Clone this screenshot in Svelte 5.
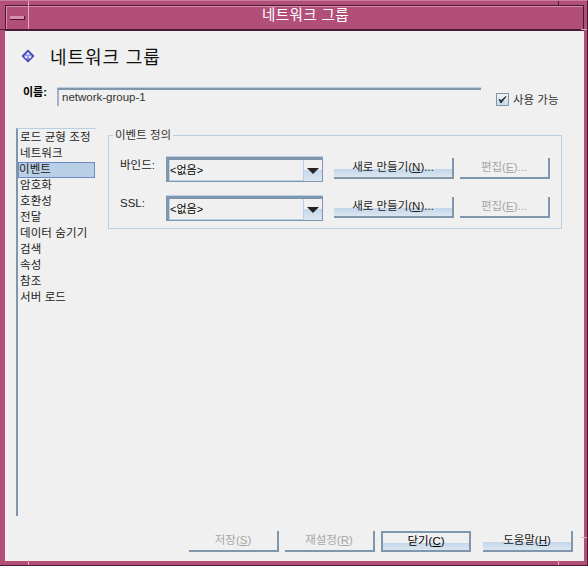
<script lang="ts">
	const sections = ['로드 균형 조정', '네트워크', '이벤트', '암호화', '호환성', '전달', '데이터 숨기기', '검색', '속성', '참조', '서버 로드'];
	const selected = '이벤트';

	const rows = [
		{ label: '바인드:', value: '<없음>' },
		{ label: 'SSL:', value: '<없음>' }
	];

	const footer = [
		{ text: '저장', key: 'S', disabled: true },
		{ text: '재설정', key: 'R', disabled: true },
		{ text: '닫기', key: 'C', isDefault: true },
		{ text: '도움말', key: 'H' }
	];
</script>

<div class="frame">
	<span class="notch top-left-v"></span>
	<span class="notch top-right-v"></span>
	<span class="notch left-h"></span>
	<span class="notch right-h"></span>
	<span class="notch bottom-left-v"></span>
	<span class="notch bottom-right-v"></span>
	<span class="notch bottom-right-h"></span>

	<header class="titlebar">
		<div class="menu-btn"><span class="dash"></span></div>
		<div class="title">네트워크 그룹</div>
	</header>

	<main class="content">
		<div class="heading">
			<svg width="14" height="14" viewBox="0 0 14 14" aria-hidden="true">
				<path d="M7 0.5 13.5 7 7 13.5 0.5 7Z" fill="#3a3fb4" />
				<path d="M7 2.5 11.5 7 7 11.5 2.5 7Z" fill="#8a8ee0" />
				<circle cx="7" cy="4.8" r="1.3" fill="#e4e6fa" />
				<circle cx="5" cy="8" r="1.3" fill="#e4e6fa" />
				<circle cx="9" cy="8" r="1.3" fill="#e4e6fa" />
			</svg>
			<h1>네트워크 그룹</h1>
		</div>

		<div class="name-row">
			<label class="name-label" for="name">이름:</label>
			<input id="name" class="name-input" value="network-group-1" />
			<div class="enabled">
				<span class="check">
					<svg width="9" height="9" viewBox="0 0 9 9" aria-hidden="true">
						<path d="M1 4.5 3 8 8 1.5 3.2 5.5Z" fill="#2b2f36" stroke="#2b2f36" stroke-width="1" />
					</svg>
				</span>
				<span>사용 가능</span>
			</div>
		</div>

		<div class="split">
			<ul class="nav">
				{#each sections as s}
					<li class:active={s === selected}>{s}</li>
				{/each}
			</ul>

			<fieldset class="group">
				<legend>이벤트 정의</legend>
				{#each rows as row}
					<div class="row">
						<span class="row-label">{row.label}</span>
						<div class="combo">
							<div class="combo-value">{row.value}</div>
							<div class="combo-arrow"><span class="tri"></span></div>
						</div>
						<button class="btn new">새로 만들기(<u>N</u>)...</button>
						<button class="btn edit" disabled>편집(<u>E</u>)...</button>
					</div>
				{/each}
			</fieldset>
		</div>

		<footer class="actions">
			{#each footer as b}
				<button class="btn foot" class:primary={b.isDefault} disabled={b.disabled}>{b.text}(<u>{b.key}</u>)</button>
			{/each}
		</footer>
	</main>
</div>

<style>
	:global(body) {
		margin: 0;
		background: #f0f0f0;
	}

	.frame {
		position: relative;
		box-sizing: border-box;
		width: 588px;
		height: 566px;
		display: flex;
		flex-direction: column;
		background: #b14f78;
		border-style: solid;
		border-width: 1px 1px 1px 0;
		border-color: #cb7ba0 #4a1a33 #4a1a33 #cb7ba0;
		padding: 4px 3px 4px 5px;
		font-family: 'Liberation Sans', 'Noto Sans CJK KR', sans-serif;
		font-size: 12px;
		color: #222;
		overflow: hidden;
	}

	.notch {
		position: absolute;
		background: #e6a9c4;
	}
	.top-left-v { left: 28px; top: 0; width: 1px; height: 28px; }
	.top-right-v { left: 558px; top: 0; width: 1px; height: 5px; background: #4a1a33; }
	.left-h { left: 0; top: 28px; width: 6px; height: 1px; background: #4a1a33; }
	.right-h { right: 0; top: 28px; width: 6px; height: 1px; }
	.bottom-left-v { left: 28px; bottom: 0; width: 1px; height: 5px; }
	.bottom-right-v { left: 558px; bottom: 0; width: 1px; height: 5px; }
	.bottom-right-h { right: 0; top: 536px; width: 6px; height: 1px; }

	.titlebar {
		flex: none;
		height: 23px;
		display: flex;
		align-items: center;
		background: #b14f78;
		border: 1px solid #4a1a33;
		box-shadow: inset 1px 1px 0 #d98fb0;
	}

	.menu-btn {
		width: 22px;
		height: 100%;
		display: flex;
		align-items: center;
		justify-content: center;
		flex: none;
	}

	.dash {
		display: block;
		width: 15px;
		height: 4px;
		background: #d98fb0;
		border-bottom: 1px solid #4a1a33;
		border-right: 1px solid #4a1a33;
		box-sizing: border-box;
	}

	.title {
		flex: 1;
		text-align: center;
		color: #fff;
		font-size: 14.5px;
		line-height: 16px;
		padding-bottom: 5px;
		letter-spacing: 0.4px;
	}

	.content {
		flex: 1;
		min-height: 0;
		display: flex;
		flex-direction: column;
		background: #f0f0f0;
		border-top: 1px solid #4a1a33;
		padding: 0 11px 9px 11px;
	}

	.heading {
		display: flex;
		align-items: center;
		gap: 15px;
		height: 24px;
		margin-top: 13px;
		padding-left: 5px;
	}

	h1 {
		margin: 0;
		font-size: 18px;
		font-weight: 400;
		letter-spacing: 0.9px;
		color: #111;
	}

	.name-row {
		display: flex;
		align-items: flex-start;
		margin-top: 20px;
		height: 40px;
	}

	.name-label {
		width: 34px;
		margin-left: 7px;
		margin-top: -4px;
		color: #000;
		font-weight: 700;
		font-size: 11px;
		line-height: 16px;
	}

	.name-input {
		box-sizing: border-box;
		width: 424px;
		height: 18px;
		padding: 0 0 2px 3px;
		margin: 0;
		background: transparent;
		border: none;
		border-top: 2px solid #7f96ad;
		border-left: 2px solid #9fb4ca;
		box-shadow: 0 -1px 0 #b8cfe5;
		outline: none;
		font: inherit;
		font-size: 11.5px;
		color: #333;
	}

	.enabled {
		display: flex;
		align-items: center;
		gap: 4px;
		margin: 3px 0 0 15px;
		font-size: 11.5px;
		color: #333;
		white-space: nowrap;
	}

	.check {
		box-sizing: border-box;
		width: 13px;
		height: 13px;
		display: flex;
		align-items: center;
		justify-content: center;
		border: 1px solid #7f96ad;
		background: linear-gradient(#f0f0f0 10%, #c4d7ea);
	}

	.split {
		flex: 1;
		min-height: 0;
		display: flex;
		gap: 12px;
	}

	.nav {
		list-style: none;
		margin: 0;
		padding: 0;
		width: 80px;
		height: 388px;
		box-sizing: border-box;
		border-top: 1px solid #b8cfe5;
		border-left: 2px solid #7f96ad;
		padding-top: 1px;
		flex: none;
	}

	.nav li {
		box-sizing: border-box;
		height: 16px;
		line-height: 15px;
		padding-left: 2px;
		font-size: 11.5px;
		letter-spacing: 0.1px;
		color: #222;
		white-space: nowrap;
	}

	.nav li.active {
		background: #b8cfe5;
		border: 1px solid #6c8ac8;
		line-height: 13px;
		padding-left: 0;
		margin-right: 1px;
	}

	.group {
		box-sizing: border-box;
		width: 454px;
		height: 100px;
		margin: 1px 0 0;
		padding: 14px 11px 0 11px;
		border: 1px solid #b8cfe5;
		align-self: flex-start;
	}

	legend {
		padding: 0 2px;
		margin-left: -7px;
		font-size: 11.5px;
		line-height: 13px;
		color: #333;
	}

	.row {
		display: flex;
		align-items: center;
		height: 26px;
		margin-bottom: 13px;
	}

	.row-label {
		width: 46px;
		font-size: 11.5px;
		margin-top: -11px;
		color: #222;
	}

	.combo {
		box-sizing: border-box;
		display: flex;
		width: 157px;
		height: 25px;
		margin-right: 11px;
		border-style: solid;
		border-color: #7f96ad;
		border-width: 3px 1px 1px 3px;
		box-shadow: 0 -1px 0 #b8cfe5;
		background: #f0f0f0;
	}

	.combo-value {
		flex: 1;
		padding-left: 0;
		font-size: 11px;
		line-height: 21px;
		color: #000;
		border-right: 1px solid #b8cfe5;
		border-bottom: 1px solid #b8cfe5;
		border-left: 1px solid #b8cfe5;
	}

	.combo-arrow {
		width: 18px;
		flex: none;
		background: linear-gradient(#f0f0f0 50%, #c4d7ea 50%, #dbe6f0);
		display: flex;
		justify-content: center;
		padding-top: 8px;
		box-sizing: border-box;
	}

	.tri {
		width: 0;
		height: 0;
		border-left: 6px solid transparent;
		border-right: 6px solid transparent;
		border-top: 6px solid #222;
	}

	.btn {
		box-sizing: border-box;
		height: 21px;
		padding: 0 0 2px;
		margin: 0;
		font: inherit;
		font-size: 11.5px;
		line-height: 14px;
		color: #222;
		border: none;
		border-right: 2px solid #7f96ad;
		border-bottom: 2px solid #7f96ad;
		background: linear-gradient(#f0f0f0 60%, #c4d7ea 60%, #dbe6f0);
	}

	.btn:disabled {
		color: #a6a6a6;
		background: #f0f0f0;
	}

	.btn u {
		text-underline-offset: 1px;
	}

	.new {
		width: 120px;
		margin-top: -1px;
		margin-right: 6px;
	}

	.edit {
		width: 90px;
		margin-top: -1px;
	}

	.actions {
		display: flex;
		justify-content: flex-end;
		gap: 6px;
	}

	.foot {
		width: 90px;
	}

	.foot.primary {
		border: 2px solid #7f96ad;
		color: #000;
		margin-right: 6px;
	}
</style>
